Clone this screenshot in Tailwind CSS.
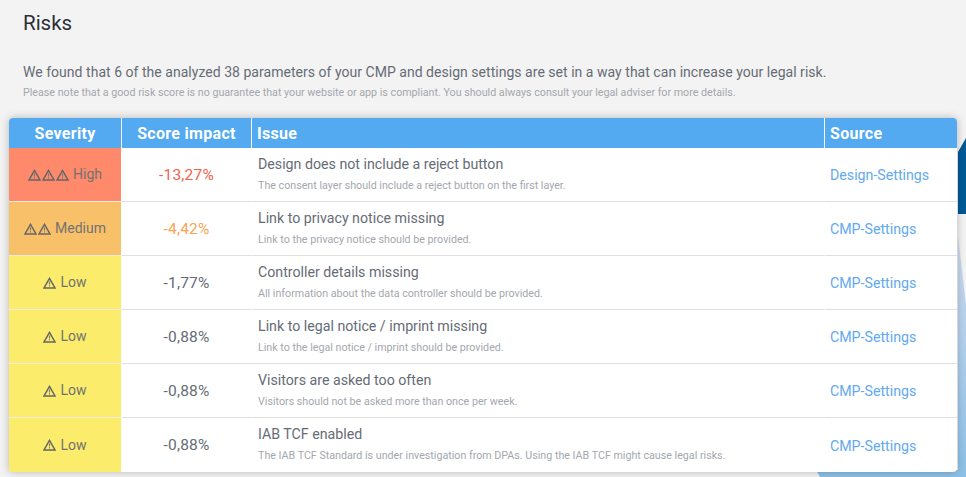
<!doctype html>
<html lang="en">
<head>
<meta charset="UTF-8">
<title>Risks</title>
<script src="https://cdn.jsdelivr.net/npm/@tailwindcss/browser@4"></script>
</head>
<body class="relative h-[477px] w-[966px] overflow-hidden bg-[#f3f3f3] font-['Roboto',sans-serif]">

<!-- background shapes -->
<svg class="absolute left-0 top-0" width="966" height="477" viewBox="0 0 966 477">
  <defs>
    <linearGradient id="wedge" x1="0" y1="0" x2="0" y2="1">
      <stop offset="0" stop-color="#cfdcf0"/>
      <stop offset="1" stop-color="#8dc0e6"/>
    </linearGradient>
  </defs>
  <polygon points="958,236 966,304 966,477 820,477 816,470 958,470" fill="url(#wedge)"/>
  <polygon points="958,152 966,138 966,214 958,214" fill="#005a96"/>
</svg>

<div class="relative">
  <h1 class="pl-[23px] pt-[8px] text-[20.5px] leading-[30px] text-[#2b2f36]">Risks</h1>
  <p class="mt-[22px] pl-[23px] text-[14px] leading-[24px] tracking-[0.03px] text-[#666c75]">We found that 6 of the analyzed 38 parameters of your CMP and design settings are set in a way that can increase your legal risk.</p>
  <p class="mt-[1px] pl-[23px] text-[10.7px] leading-[16px] text-[#a3a7ae]">Please note that a good risk score is no guarantee that your website or app is compliant. You should always consult your legal adviser for more details.</p>

  <div class="ml-[9px] mt-[17px] w-[948px] overflow-hidden rounded-[4px] bg-white shadow-[0_0_8px_rgba(0,0,0,0.25)]">
    <div class="grid h-[30px] grid-cols-[112px_130px_573px_133px] bg-[#53aaf0] text-[16px] font-bold leading-[31px] tracking-[0.3px] text-white">
      <div class="text-center">Severity</div>
      <div class="border-l border-white text-center">Score impact</div>
      <div class="border-l border-white pl-[5px]">Issue</div>
      <div class="border-l border-white pl-[5px]">Source</div>
    </div>
    <div id="rows"></div>
  </div>
</div>

<script>
const warn = '<svg class="block" width="13" height="12" viewBox="0 0 13 12" fill="none" stroke="#666" stroke-width="1.5"><path d="M6.5 1.4 L12 11 H1 Z"/><path d="M6.5 4.5 V7.5 M6.5 8.3 V9.6" stroke-width="1.1" stroke="#777"/></svg>';
const data = [
  ['bg-[#ff8a6b]', 3, 'High', '-13,27%', 'text-[#f5604a]', 'Design does not include a reject button', 'The consent layer should include a reject button on the first layer.', 'Design-Settings'],
  ['bg-[#f9c06a]', 2, 'Medium', '-4,42%', 'text-[#f8a453]', 'Link to privacy notice missing', 'Link to the privacy notice should be provided.', 'CMP-Settings'],
  ['bg-[#fbec6b]', 1, 'Low', '-1,77%', 'text-[#666c75]', 'Controller details missing', 'All information about the data controller should be provided.', 'CMP-Settings'],
  ['bg-[#fbec6b]', 1, 'Low', '-0,88%', 'text-[#666c75]', 'Link to legal notice / imprint missing', 'Link to the legal notice / imprint should be provided.', 'CMP-Settings'],
  ['bg-[#fbec6b]', 1, 'Low', '-0,88%', 'text-[#666c75]', 'Visitors are asked too often', 'Visitors should not be asked more than once per week.', 'CMP-Settings'],
  ['bg-[#fbec6b]', 1, 'Low', '-0,88%', 'text-[#666c75]', 'IAB TCF enabled', 'The IAB TCF Standard is under investigation from DPAs. Using the IAB TCF might cause legal risks.', 'CMP-Settings'],
];
document.getElementById('rows').innerHTML = data.map((r, i) => {
  const line = i < 5 ? 'border-b border-[#e0e0e0]' : '';
  const lineSev = i < 5 ? 'border-b border-[#f4ece2]' : '';
  return `
  <div class="grid h-[54px] grid-cols-[112px_130px_573px_133px]">
    <div class="${r[0]} ${lineSev} flex items-center justify-center gap-[1px] text-[14px] text-[#727272]">${warn.repeat(r[1])}<span class="ml-[3px]">${r[2]}</span></div>
    <div class="${r[4]} ${line} flex items-center justify-center border-l border-l-white pt-[2px] text-[15.5px] tracking-[0.2px]">${r[3]}</div>
    <div class="${line} border-l border-l-white pl-[6px] pt-[6px]">
      <div class="text-[14.2px] leading-[20px] text-[#666c75]">${r[5]}</div>
      <div class="mt-[4px] text-[10.7px] leading-[16px] text-[#a3a7ae]">${r[6]}</div>
    </div>
    <div class="${line} flex items-center border-l border-l-white pl-[5px] pt-[3px] text-[14.2px] text-[#63a9ef]">${r[7]}</div>
  </div>`;
}).join('');
</script>
</body>
</html>
